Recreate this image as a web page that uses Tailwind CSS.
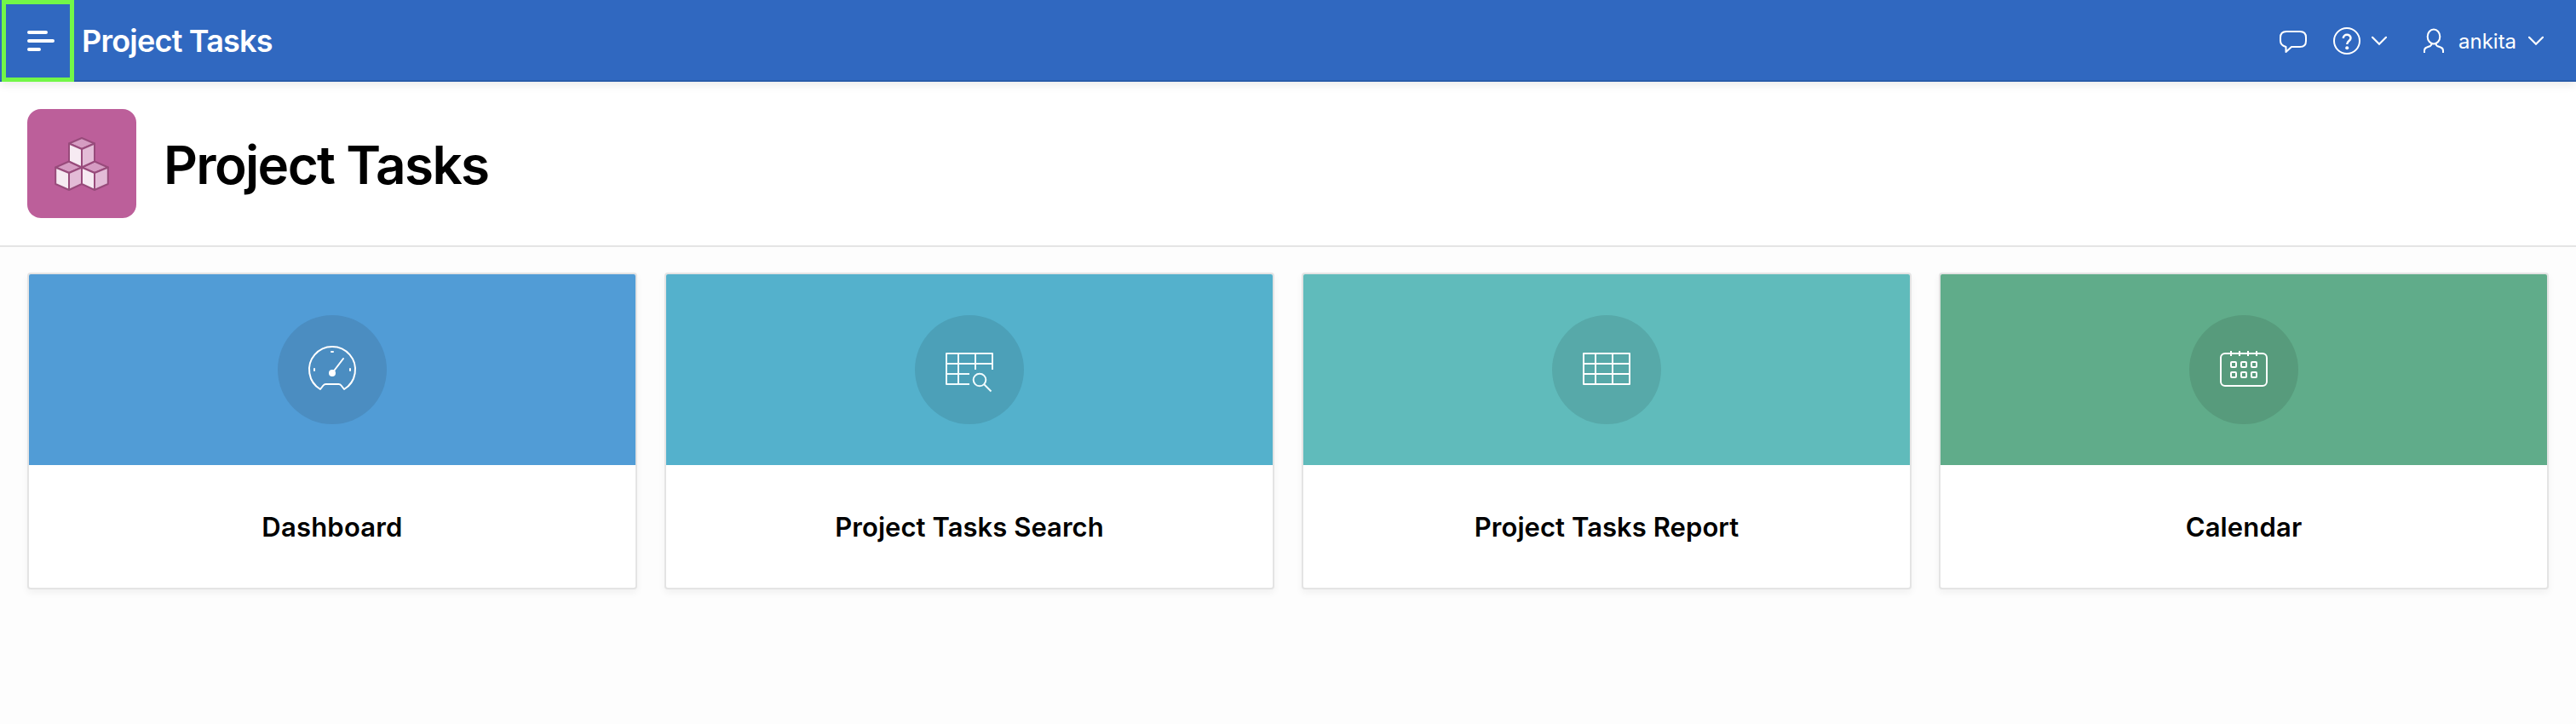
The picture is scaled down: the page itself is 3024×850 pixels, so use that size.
<!DOCTYPE html>
<html lang="en">
<head>
<meta charset="utf-8">
<title>Project Tasks</title>
<script src="https://cdn.jsdelivr.net/npm/@tailwindcss/browser@4"></script>
</head>
<body class="min-h-[850px] bg-[#fdfdfd] font-['Inter',sans-serif] text-black">
<header class="relative z-10 flex h-24 items-stretch border-b-2 border-[#295caa] bg-[#3068c0] pl-[2px] text-white shadow-[0_4px_10px_rgba(0,0,0,0.08)]">
  <button aria-label="Menu" class="-mb-[2px] flex w-[85px] items-center border-5 border-[#72f748] pl-[25px]">
    <svg class="h-6 w-8" viewBox="0 0 32 24" fill="none" stroke="#fff" stroke-width="4" stroke-linecap="round"><path d="M2 2H22M2 12H30M2 22H14"/></svg>
  </button>
  <div class="flex h-24 items-center pl-[9px] text-[36px] font-semibold tracking-[-0.78px] whitespace-nowrap">Project Tasks</div>
  <nav class="ml-auto flex h-24 items-center pr-[38px]">
    <svg class="mr-[31px] h-8 w-8" viewBox="0 0 32 32" fill="none" stroke="#fff" stroke-width="2" stroke-linejoin="round"><path d="M8 5H24Q31 5 31 12V16Q31 23 24 23H14L7.5 29V23Q1 21 1 16V12Q1 5 8 5Z"/></svg>
    <svg class="mr-[13px] h-8 w-8" viewBox="0 0 32 32" fill="none" stroke="#fff"><circle cx="16" cy="16" r="15" stroke-width="2"/><path d="M11.8 13C11.8 7.5 20.5 7.500 20.500 12.700C20.500 16 16.200 16 16.200 20" stroke-width="2.500"/><circle cx="16.200" cy="24.300" r="2" fill="#fff" stroke="none"/></svg>
    <svg class="mr-[42px] h-3 w-[18px]" viewBox="0 0 18 12" fill="none" stroke="#fff" stroke-width="2.200" stroke-linecap="round"><path d="M1 1.800L9 9.800L17 1.800"/></svg>
    <svg class="mr-4 h-8 w-[26px]" viewBox="0 0 26 32" fill="none" stroke="#fff" stroke-width="2"><ellipse cx="13" cy="11" rx="7.300" ry="8.500"/><path d="M2 30V27.500Q2 24.500 5 23.500L9 22Q10.500 21 10.800 19M24 30V27.500Q24 24.500 21 23.500L17 22Q15.500 21 15.200 19"/></svg>
    <span class="w-[68px] pt-px text-[24px]">ankita</span>
    <svg class="ml-[14px] h-3 w-[18px]" viewBox="0 0 18 12" fill="none" stroke="#fff" stroke-width="2.200" stroke-linecap="round"><path d="M1 1.800L9 9.800L17 1.800"/></svg>
  </nav>
</header>
<section class="flex h-[194px] items-center gap-8 border-b-2 border-[#e5e5e5] bg-white px-8">
  <div class="flex size-32 items-center justify-center rounded-2xl bg-[#bc5f9a]">
    <svg class="size-16" viewBox="0 0 64 64" stroke="#984b7b" stroke-width="2" stroke-linejoin="round">
      <g fill="#d59cc2"><path d="M32 2L47 8.500L32 15L17 8.500Z"/><path d="M17 29.500L32 36.500L17 43L1.200 36.500Z"/><path d="M47 29.500L62.800 36.500L47 43L32 36.500Z"/></g>
      <g fill="#f6eaf2"><path d="M17 8.500L32 15V36.500L17 29.500Z"/><path d="M1.200 36.500L17 43V63L1.200 56Z"/><path d="M32 36.500L47 43V63L32 56Z"/></g>
      <g fill="#e3bcd7"><path d="M47 8.500L32 15V36.500L47 29.500Z"/><path d="M32 36.500L17 43V63L32 56Z"/><path d="M62.800 36.500L47 43V63L62.800 56Z"/></g>
    </svg>
  </div>
  <h1 class="pt-[2px] text-[62px] font-semibold tracking-[-1.65px] whitespace-nowrap">Project Tasks</h1>
</section>
<main class="grid grid-cols-4 gap-8 px-8 pt-[30px]">
  <a class="h-[372px] overflow-hidden rounded-[4px] border-2 border-[#e4e4e4] bg-white shadow-[0_4px_8px_rgba(0,0,0,0.05)]">
    <div class="flex h-56 items-center justify-center bg-[#519cd6]"><div class="flex size-32 items-center justify-center rounded-full bg-[#4b8dc1]">
      <svg class="size-16" viewBox="0 0 64 64" fill="none" stroke="#fff" stroke-width="2" stroke-linecap="round" stroke-linejoin="round"><path d="M18 55A27 27 0 1 1 46 55L42.500 50.500Q41.300 49 39.500 49H24.500Q22.700 49 21.500 50.500Z"/><path d="M32 36L45 19"/><path d="M31 11H33M11 31V33M53 31V33" /><circle cx="32" cy="36" r="4" fill="#fff" stroke="none"/></svg>
    </div></div>
    <h3 class="flex h-36 items-center justify-center pt-[2px] text-[31px] font-semibold tracking-[0.2px]">Dashboard</h3>
  </a>
  <a class="h-[372px] overflow-hidden rounded-[4px] border-2 border-[#e4e4e4] bg-white shadow-[0_4px_8px_rgba(0,0,0,0.05)]">
    <div class="flex h-56 items-center justify-center bg-[#54b1cc]"><div class="flex size-32 items-center justify-center rounded-full bg-[#4ca0b8]">
      <svg class="size-16" viewBox="0 0 64 64" fill="none" stroke="#f0fbfd" stroke-width="2" stroke-linejoin="round"><path d="M32 49H5V13H59V32M5 25H59M5 37H32M19 13V49M39 13V32"/><circle cx="44" cy="44" r="7.300"/><path d="M49.500 49.500L57.500 57.500"/></svg>
    </div></div>
    <h3 class="flex h-36 items-center justify-center pt-[2px] text-[31px] font-semibold tracking-[0.05px]">Project Tasks Search</h3>
  </a>
  <a class="h-[372px] overflow-hidden rounded-[4px] border-2 border-[#e4e4e4] bg-white shadow-[0_4px_8px_rgba(0,0,0,0.05)]">
    <div class="flex h-56 items-center justify-center bg-[#60bbbb]"><div class="flex size-32 items-center justify-center rounded-full bg-[#57a9a9]">
      <svg class="size-16" viewBox="0 0 64 64" fill="none" stroke="#fff" stroke-width="2" stroke-linejoin="round"><path d="M5 13H59V49H5ZM5 25H59M5 37H59M19 13V49M39 13V49"/></svg>
    </div></div>
    <h3 class="flex h-36 items-center justify-center pt-[2px] text-[31px] font-semibold tracking-[0.05px]">Project Tasks Report</h3>
  </a>
  <a class="h-[372px] overflow-hidden rounded-[4px] border-2 border-[#e4e4e4] bg-white shadow-[0_4px_8px_rgba(0,0,0,0.05)]">
    <div class="flex h-56 items-center justify-center bg-[#60ac8a]"><div class="flex size-32 items-center justify-center rounded-full bg-[#579b7c]">
      <svg class="size-16" viewBox="0 0 64 64" fill="none" stroke="#fff" stroke-width="2"><rect x="5" y="13" width="54" height="38" rx="5"/><path d="M17 10V16M27 10V16M37 10V16M47 10V16"/><rect x="17" y="23" width="6" height="6" rx="1"/><rect x="29" y="23" width="6" height="6" rx="1"/><rect x="41" y="23" width="6" height="6" rx="1"/><rect x="17" y="35" width="6" height="6" rx="1"/><rect x="29" y="35" width="6" height="6" rx="1"/><rect x="41" y="35" width="6" height="6" rx="1"/></svg>
    </div></div>
    <h3 class="flex h-36 items-center justify-center pt-[2px] text-[31px] font-semibold tracking-[0.15px]">Calendar</h3>
  </a>
</main>
</body>
</html>
